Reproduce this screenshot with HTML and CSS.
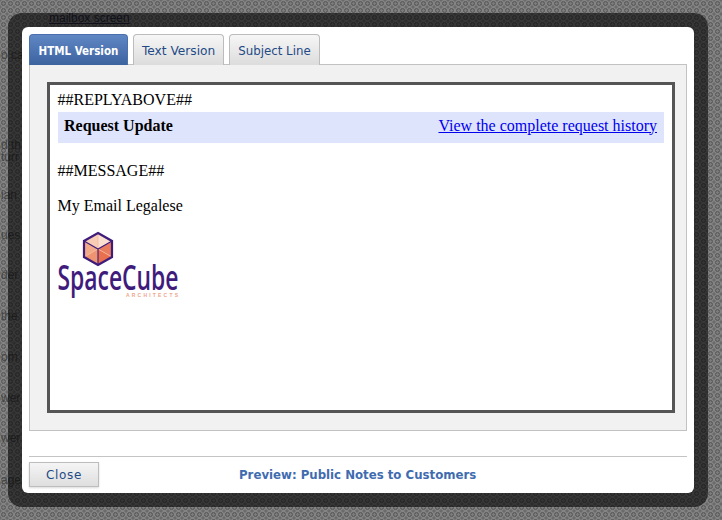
FILE: index.html
```html
<!DOCTYPE html>
<html lang="en">
<head>
<meta charset="utf-8">
<title>Preview: Public Notes to Customers</title>
<link rel="stylesheet" href="styles.css">
</head>
<body>
<div class="behind">
  <a class="behind-link">mailbox screen</a>
  <span class="snip s1">o ca</span>
  <span class="snip s2">d th</span>
  <span class="snip s3">turr</span>
  <span class="snip s4">ian</span>
  <span class="snip s5">ues</span>
  <span class="snip s6">der</span>
  <span class="snip s7">the</span>
  <span class="snip s8">om</span>
  <span class="snip s9">wer</span>
  <span class="snip s10">wer</span>
  <span class="snip s11">age</span>
</div>
<div class="dialog">
  <div class="sheet">
    <div class="tabs">
      <div class="tab active">HTML Version</div>
      <div class="tab tab-text">Text Version</div>
      <div class="tab tab-subject">Subject Line</div>
    </div>
    <div class="panel">
      <div class="frame">
        <div class="line first">##REPLYABOVE##</div>
        <div class="banner">
          <strong>Request Update</strong>
          <a href="#" class="history">View the complete request history</a>
        </div>
        <p class="line message">##MESSAGE##</p>
        <p class="line legal">My Email Legalese</p>
        <svg class="logo" width="124" height="68" viewBox="0 0 124 68" aria-label="SpaceCube Architects">
          <g transform="translate(-57 -232)">
            <polygon points="98,234 112,242 98,250" fill="#fbdfcf"/>
            <polygon points="98,234 84,242 98,250" fill="#f8cdb6"/>
            <polygon points="84,242 84,258 98,250" fill="#f2a988"/>
            <polygon points="84,258 98,266 98,250" fill="#ee9470"/>
            <polygon points="98,266 112,258 98,250" fill="#e8704f"/>
            <polygon points="112,258 112,242 98,250" fill="#e97c5c"/>
            <path d="M98 234V250M84 258L98 250L112 258" stroke="#f7b79d" stroke-width="0.8" fill="none"/>
            <path d="M84 242L98 250L112 242M98 250V266" stroke="#3f1c7c" stroke-width="1.1" fill="none"/>
            <polygon points="98,234 112,242 112,258 98,266 84,258 84,242" fill="none" stroke="#3f1c7c" stroke-width="2.2"/>
            <text class="logo-name" x="57.5" y="291" textLength="121" lengthAdjust="spacingAndGlyphs">SpaceCube</text>
            <text class="logo-sub" x="126" y="297.5" textLength="52" lengthAdjust="spacing">ARCHITECTS</text>
          </g>
        </svg>
      </div>
    </div>
    <div class="footer">
      <button class="close" type="button">Close</button>
      <div class="title">Preview: Public Notes to Customers</div>
    </div>
  </div>
</div>
</body>
</html>
```
FILE: styles.css
```css
html, body {
  margin: 0;
  padding: 0;
}
body {
  width: 722px;
  height: 520px;
  overflow: hidden;
  position: relative;
  box-sizing: border-box;
  padding: 13px 14px 13px 8px;
  background-color: #727272;
  background-image:
    radial-gradient(circle at 3.5px 3.5px, #7c7c7c 0, #7c7c7c 1px, #626262 1.2px, #626262 2.2px, #848484 2.6px, #848484 3.4px, #6a6a6a 3.8px);
  background-size: 7px 7px;
}
.behind {
  position: absolute;
  inset: 0;
}
.behind-link {
  position: absolute;
  left: 49px;
  top: 11px;
  font: 12px "Liberation Sans", sans-serif;
  color: #2a2a44;
  text-decoration: underline;
}
.snip {
  position: absolute;
  left: 1px;
  font: 12px/12px "Liberation Sans", sans-serif;
  color: #444;
}
.s1 { top: 49px; }
.s2 { top: 139px; }
.s3 { top: 151px; }
.s4 { top: 189px; }
.s5 { top: 229px; }
.s6 { top: 269px; }
.s7 { top: 310px; }
.s8 { top: 351px; }
.s9 { top: 392px; }
.s10 { top: 432px; }
.s11 { top: 474px; }

.dialog {
  position: relative;
  box-sizing: border-box;
  width: 700px;
  height: 494px;
  padding: 14px;
  border-radius: 14px;
  background: rgba(0, 0, 0, 0.58);
}
.sheet {
  box-sizing: border-box;
  height: 100%;
  border-radius: 6px;
  background: #fff;
  padding: 7px 7px 0;
  font-family: "DejaVu Sans", sans-serif;
}
.tabs {
  display: flex;
  gap: 5px;
  height: 30px;
}
.tab {
  box-sizing: border-box;
  height: 31px;
  padding: 0 8px;
  line-height: 32px;
  font-size: 11.9px;
  color: #1f4a86;
  background: linear-gradient(#f6f6f6, #dcdcdc);
  border: 1px solid #bcbcbc;
  border-bottom: 0;
  border-radius: 4px 4px 0 0;
  position: relative;
  z-index: 1;
}
.tab-text {
  font-size: 12.2px;
}
.tab-subject {
  font-size: 11.8px;
}
.tab.active {
  color: #fff;
  font-family: "DejaVu Sans Condensed", "DejaVu Sans", sans-serif;
  font-size: 11.5px;
  font-weight: 700;
  padding: 0 8.5px;
  background: linear-gradient(#5f87c4, #3d639f);
  border-color: #4a70ad;
}
.panel {
  box-sizing: border-box;
  height: 367px;
  width: 658px;
  background: #f1f1f1;
  border: 1px solid #c2c2c2;
  padding: 17px 0 0 17px;
}
.frame {
  box-sizing: border-box;
  width: 628px;
  height: 331px;
  border: 3px solid #555;
  background: #fff;
  padding: 6px 8px 0 7.5px;
  font: 16px/18px "Liberation Serif", serif;
  color: #000;
}
.line {
  margin: 0;
}
.banner {
  box-sizing: border-box;
  display: flex;
  justify-content: space-between;
  align-items: center;
  height: 31px;
  margin: 3px 0 0 0.5px;
  padding: 0 7px 4px 6px;
  background: #dfe4fd;
}
.history {
  color: #0000ee;
}
.message {
  margin-top: 19px;
}
.legal {
  margin-top: 17px;
}
.logo {
  display: block;
  margin: 16px 0 0 -0.5px;
}
.logo-name {
  font: 600 35px "Open Sans", sans-serif;
  fill: #3f1c7c;
}
.logo-sub {
  font: 700 5px "Liberation Sans", sans-serif;
  fill: #f0a58c;
}
.footer {
  margin-top: 25px;
  border-top: 1px solid #c4c4c4;
  width: 658px;
  padding-top: 5px;
  display: flex;
  align-items: center;
}
.close {
  box-sizing: border-box;
  width: 70px;
  height: 25px;
  padding: 0;
  background: linear-gradient(#f5f5f5, #dedede);
  border: 1px solid #bdbdbd;
  box-shadow: 0 1px 2px rgba(0, 0, 0, 0.15);
  color: #1f4a86;
  font: 12px "DejaVu Sans", sans-serif;
  letter-spacing: 0.7px;
}
.title {
  margin: 1px 0 0 140px;
  font-size: 11.75px;
  font-weight: 700;
  color: #3f6cb0;
  white-space: nowrap;
}
```
